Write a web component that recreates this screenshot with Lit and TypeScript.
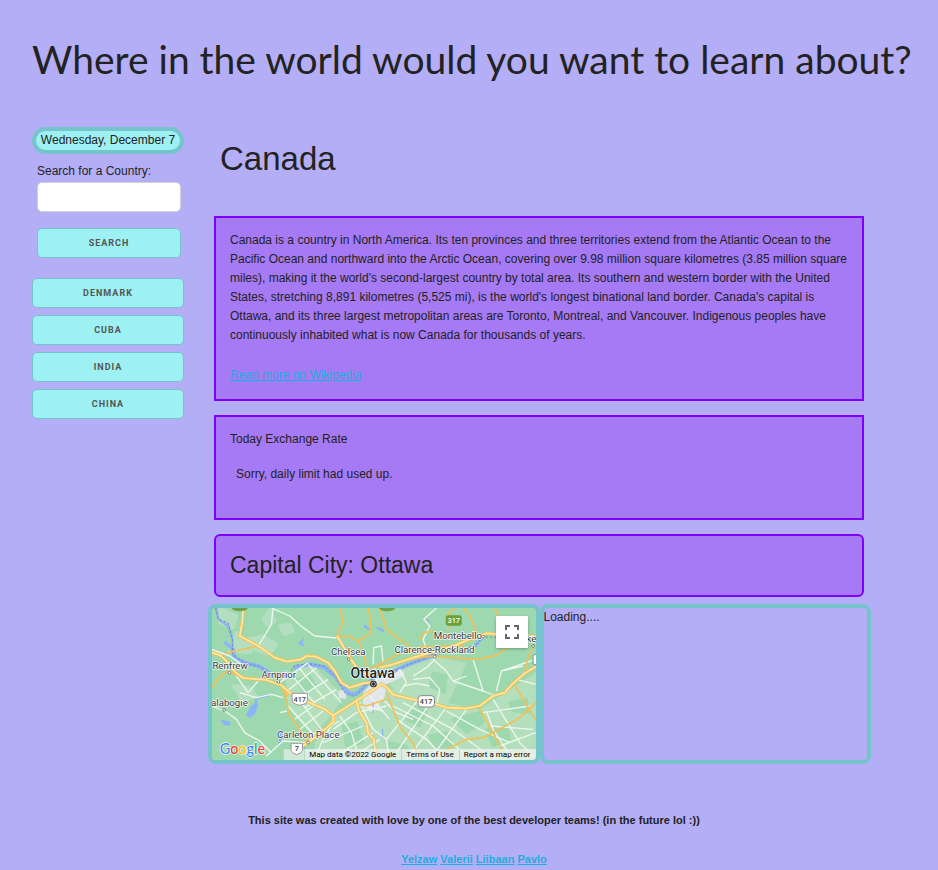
import { LitElement, html, css, svg } from "lit";
import { customElement, property } from "lit/decorators.js";

const COUNTRIES = ["Denmark", "Cuba", "India", "China"];
const AUTHORS = ["Yelzaw", "Valerii", "Liibaan", "Pavlo"];

// Town labels: name, x, y, font size
const TOWNS: [string, number, number, number][] = [
  ["Renfrew", 38, 219, 29],
  ["Arnprior", 185, 246, 29],
  ["alabogie", 34, 330, 29],
  ["Chelsea", 394, 178, 29],
  ["Carleton Place", 232, 427, 29],
  ["Montebello", 702, 130, 29],
  ["Clarence-Rockland", 584, 170, 29],
  ["ke", 980, 137, 29],
  ["Ottawa", 452, 246, 42],
];

const DOTS: [number, number][] = [
  [89, 230], [236, 258], [73, 342], [447, 189], [325, 440], [850, 122], [705, 182], [1000, 150],
];

// Motorways and trunk roads, drawn with a casing
const TRUNKS = [
  "M36 170 L62 178 L80 195 L108 230 L130 246 L200 252 L245 268 L270 290 L325 318 L372 338 L400 358 L430 340 L470 314 L520 282 L545 264 L562 275 L580 296 L640 310 L700 322 L740 334 L795 338 L840 330 L880 300 L915 290 L940 262 L975 232 L1008 212",
  "M400 358 L402 376 L370 405 L325 440 L308 450",
  "M470 314 L478 345 L500 380 L505 410 L522 430 L530 492",
  "M130 36 L128 75 L120 120 L176 150 L225 185 L262 197 L305 190 L320 180 L350 182 L385 200 L405 225 L425 260 L450 275 L490 262 L520 258",
  "M412 120 L430 150 L450 185 L475 220 L505 238",
  "M540 215 L580 205 L640 185 L700 168 L760 150 L810 130 L860 112 L1008 122",
];

const ROADS = [
  "M75 172 L120 162 L176 150 M36 275 L62 240 L85 225 L130 246",
  "M245 268 L262 315 L265 350 L325 440 M250 275 L262 300",
  "M412 120 L430 75 L420 36 M412 120 L450 122 L475 135 L490 165 L500 210 M475 135 L510 115 L513 75 L505 36",
  "M510 215 L560 208 L620 190 L700 180 L830 190 L890 178 L930 150 L1008 130",
  "M530 210 L600 172 L670 152 L790 150 M660 130 L672 110 L700 105 M750 100 L740 60 L765 36",
  "M790 36 L812 60 L830 110 M540 36 L560 100 L640 160 M885 36 L900 70",
  "M835 330 L860 375 L890 430 L925 492 M738 462 L800 430 L850 425 L900 400 L960 365 L1008 320",
  "M560 290 L580 340 L602 395 L640 440 L660 492 M940 262 L965 300 L1008 372 M1000 150 L985 185 L975 232",
  "M480 325 L500 330 L560 310",
];

const STREETS = [
  "M36 160 L90 180 L140 215 M220 36 L215 85 L176 150 M215 36 L270 60 L310 95 L345 120 L412 126",
  "M110 240 L145 290 L175 255 M120 290 L170 305 L215 295 L250 305 M36 330 L75 345 L110 370 L135 410 L180 435 L215 470",
  "M240 260 L325 200 M262 285 L350 215 M290 310 L385 250 M315 335 L410 280 M285 370 L340 330 M300 400 L370 345 M330 420 L420 375",
  "M275 235 L350 330 M300 218 L375 310 M325 205 L425 320 M290 300 L365 400 M265 330 L345 420",
  "M200 480 L250 435 L325 440 M240 350 L262 345 M345 492 L365 440 L402 376",
  "M420 360 L455 410 L480 492 M400 400 L470 350 L560 330 M370 440 L490 390 M410 480 L520 410 M445 492 L540 430",
  "M520 205 L522 155 L545 150 L550 200 M525 215 L530 265 M500 330 L550 345",
  "M590 240 L600 220 L620 260 L600 290 M680 160 L670 130 L690 90 L672 70 L710 36",
  "M700 190 L740 225 L760 255 L850 285 L890 300 M705 190 L680 215 L640 240 M760 255 L800 240 M820 190 L850 285",
  "M640 250 L690 245 L720 280 L712 322 M610 270 L650 262 L690 270 M890 285 L905 225 L1008 190 M905 225 L970 210",
  "M655 312 L560 430 M690 322 L590 470 M740 334 L620 492 M800 340 L690 492 M860 345 L880 400 L940 492",
  "M580 330 L700 390 L790 470 M610 320 L760 400 L870 480 M590 370 L680 430 L740 492 M740 345 L840 400 L930 440",
  "M880 310 L960 440 L1000 480 M850 350 L990 330 M870 390 L1000 400 M900 450 L1008 410 M950 250 L1008 265",
  "M480 320 L520 400 L560 430 L570 492 M540 300 L590 350 L640 370 M510 300 L570 370",
];

const WOODS = [
  "M60 36 L110 60 L100 95 L60 80Z", "M140 130 L190 120 L230 145 L210 175 L165 160Z",
  "M110 110 L90 165 L150 170 L160 150Z", "M240 90 L270 85 L280 105 L255 115Z",
  "M210 40 L225 75 L205 90 L190 70Z", "M100 270 L150 275 L170 300 L130 315Z",
];

const FARMS = [
  "M260 250 L330 195 L430 300 L400 350 L340 420 L260 330Z",
  "M400 360 L470 315 L540 270 L640 300 L840 340 L1008 230 L1008 492 L345 492 L345 440Z",
  "M540 225 L700 180 L800 200 L780 250 L740 330 L590 290Z",
];

const DARK_PATCHES = [
  "M640 330 L680 345 L660 390 L620 370Z", "M760 370 L840 350 L850 380 L800 410Z",
  "M860 400 L920 390 L930 430 L880 450Z", "M700 230 L740 240 L735 290 L690 270Z",
  "M570 440 L620 450 L640 492 L560 492Z", "M690 420 L740 410 L760 450 L710 460Z",
  "M430 390 L470 380 L490 440 L440 450Z", "M290 250 L330 240 L350 275 L310 290Z",
  "M930 320 L980 310 L990 350 L940 345Z",
];

@customElement("area-map")
export class AreaMap extends LitElement {
  static styles = css`
    :host { display: block; position: relative; overflow: hidden; background: #9ed8ae; }
    .canvas { display: block; width: 100%; height: 100%; }
    .label { font-family: Roboto, sans-serif; fill: #333; stroke: #fff; stroke-width: 4px; stroke-linejoin: round; paint-order: stroke; }
    .label.city { font-weight: 500; fill: #222; }
    .shield { font: 500 22px Roboto, sans-serif; fill: #444; text-anchor: middle; }
    .shield.light { fill: #fff; }
    .logo { font: 500 43px Lato, sans-serif; stroke: #fff; stroke-width: 4px; paint-order: stroke; }
    .blue { fill: #4285f4; }
    .red { fill: #e94235; }
    .yellow { fill: #fabb05; }
    .green { fill: #34a853; }
    .fullscreen {
      position: absolute; top: 8px; right: 8px; width: 32px; height: 32px;
      display: flex; align-items: center; justify-content: center;
      padding: 0; border: 0; border-radius: 1px; background: #fff;
      box-shadow: 0 1px 3px rgba(0, 0, 0, 0.3);
    }
    .credits {
      position: absolute; right: 0; bottom: 0; display: flex; height: 11px;
      font: 8px/11px Roboto, sans-serif; color: #000; white-space: nowrap;
    }
    .credits > * { padding: 0 5px 0 4px; color: inherit; text-decoration: none; background: rgba(245, 245, 245, 0.7); border-left: 1px solid #b9d8c2; }
  `;

  render() {
    return html`
      <svg class="canvas" viewBox="36 36 972 456" preserveAspectRatio="xMidYMid slice" role="img" aria-label="Map of Ottawa">
        <rect x="36" y="36" width="972" height="456" fill="#9ed8ae" />
        ${FARMS.map((d) => svg`<path d=${d} fill="#b3dfbd" />`)}
        ${WOODS.map((d) => svg`<path d=${d} fill="#b3dfc0" stroke="#b3dfc0" stroke-width="10" stroke-linejoin="round" />`)}
        ${DARK_PATCHES.map((d) => svg`<path d=${d} fill="#9ed8ae" stroke="#9ed8ae" stroke-width="8" stroke-linejoin="round" />`)}
        <path d="M490 290 L540 235 L610 225 L615 240 L560 265 L555 300 L520 350 L490 335Z M415 285 L435 280 L440 310 L418 305Z" fill="#e1e6ea" />
        <g fill="none" stroke="#8ab4f8" stroke-linecap="round" stroke-linejoin="round">
          <path stroke-width="12" d="M98 160 L105 185 L135 200 L180 212 L215 235 L262 242" />
          <path stroke-width="12" d="M285 215 L330 204 L375 215 L410 245 L435 280 L455 296 L475 290 L500 265 L530 240 L580 226 L625 206 L700 178" />
          <path stroke-width="7" d="M48 36 L56 70 L85 90 L98 130 L98 165" />
          <path stroke-width="10" d="M78 140 L100 160 M680 188 L697 174 M845 128 L826 150" />
          <path stroke-width="7" d="M170 310 L165 335 M178 305 L205 298 M240 440 L246 405 M495 90 L508 100 M535 96 L550 104" />
          <path stroke-width="4" d="M316 455 L316 492 M548 400 L550 425 M520 320 L520 350 M682 70 L690 78" />
        </g>
        <path d="M155 328 L176 322 L168 350 L152 366 L138 358Z M295 142 L313 125 L308 142 L314 150 L300 147Z M60 370 L94 378 L88 390 L72 386Z" fill="#8ab4f8" />
        <path d="M48 36 L56 70 L85 80 L98 130 L98 175 L135 200 L180 212 L215 235 L262 242 L285 208 L330 204 L375 210 L410 245 L435 290 L465 302 L500 265 L530 240 L580 226 L625 206 L700 178 L780 160 L826 150 L850 122 L900 125" fill="none" stroke="#7a86a8" stroke-width="3" stroke-dasharray="7 6" />
        ${STREETS.map((d) => svg`<path d=${d} fill="none" stroke="#eef7ef" stroke-width="4" stroke-linejoin="round" />`)}
        ${ROADS.map((d) => svg`<path d=${d} fill="none" stroke="#f1c057" stroke-width="5" stroke-linejoin="round" />`)}
        ${TRUNKS.map((d) => svg`<path d=${d} fill="none" stroke="#f4bd4c" stroke-width="10" stroke-linejoin="round" />`)}
        ${TRUNKS.map((d) => svg`<path d=${d} fill="none" stroke="#ffe9a8" stroke-width="5" stroke-linejoin="round" />`)}
        <ellipse cx="120" cy="36" rx="24" ry="10" fill="#6fa04c" />
        <ellipse cx="562" cy="36" rx="24" ry="10" fill="#6fa04c" />
        <rect x="738" y="58" width="48" height="31" rx="7" fill="#6b9f3b" />
        <text class="shield light" x="762" y="81">317</text>
        <path d="M277 292 h46 v20 q0 8 -10 12 l-13 4 l-13 -4 q-10 -4 -10 -12z" fill="#fff" stroke="#999" stroke-width="3" />
        <text class="shield" x="300" y="318">417</text>
        <rect x="655" y="299" width="49" height="34" rx="9" fill="#fff" stroke="#888" stroke-width="3" />
        <text class="shield" x="679" y="324">417</text>
        <path d="M252 460 h65 v32 h-65z" fill="#e6f2e8" opacity="0.7" />
        <path d="M274 442 h34 v22 q0 6 -17 12 q-17 -6 -17 -12z" fill="#fff" stroke="#999" stroke-width="3" />
        <text class="shield" x="291" y="466">7</text>
        <rect x="1000" y="176" width="20" height="30" rx="5" fill="#fff" stroke="#888" stroke-width="3" />
        ${DOTS.map(([x, y]) => svg`<circle cx=${x} cy=${y} r="4" fill="#fff" stroke="#555" stroke-width="2" />`)}
        <circle cx="521" cy="264" r="10" fill="#222" />
        <circle cx="521" cy="264" r="6" fill="none" stroke="#fff" stroke-width="2" />
        ${TOWNS.map(([name, x, y, size]) => svg`<text class=${size > 40 ? "label city" : "label"} x=${x} y=${y} font-size=${size}>${name}</text>`)}
        <text class="logo" x="60" y="473"><tspan class="blue">G</tspan><tspan class="red">o</tspan><tspan class="yellow">o</tspan><tspan class="blue">g</tspan><tspan class="green">l</tspan><tspan class="red">e</tspan></text>
      </svg>
      <button class="fullscreen" aria-label="Toggle fullscreen view">
        <svg width="16" height="16" viewBox="0 0 16 16" fill="none" stroke="#666" stroke-width="2">
          <path d="M2 6V2h4M10 2h4v4M14 10v4h-4M6 14H2v-4" />
        </svg>
      </button>
      <div class="credits">
        <span>Map data ©2022 Google</span>
        <a href="#terms">Terms of Use</a>
        <a href="#report">Report a map error</a>
      </div>
    `;
  }
}

@customElement("app-root")
export class AppRoot extends LitElement {
  @property() country = "Canada";

  static styles = css`
    :host {
      display: block; box-sizing: border-box; min-height: 100vh; padding: 0 22px 0 32px;
      background: #b4aef7; color: #222;
      font: 12px/19px "Liberation Sans", Arial, sans-serif;
    }
    * { box-sizing: border-box; }
    h1, h2, h3, p { margin: 0; font-weight: 400; }
    a { color: #1eaedb; }
    .title { padding: 34px 0 43px; font: 39px/50px "Trebuchet MS", Lato, sans-serif; }
    .layout { display: grid; grid-template-columns: 152px minmax(0, 1fr); column-gap: 24px; padding-right: 45px; }
    .sidebar { display: flex; flex-direction: column; }
    .date {
      border: 4px solid #76c4cb; border-radius: 14px; background: #9df1f3;
      text-align: center; white-space: nowrap;
    }
    .search { display: flex; flex-direction: column; padding: 8px 3px 20px 5px; }
    .field { height: 30px; margin: 1px 0 16px; padding: 6px 10px; border: 1px solid #d1d1d1; border-radius: 5px; background: #fff; font: inherit; }
    .button {
      height: 30px; padding: 0; border: 1px solid #76c4cb; border-radius: 5px; background: #9df1f3;
      color: #555; font: 700 9px/28px Roboto, "Liberation Sans", sans-serif;
      letter-spacing: 1px; text-transform: uppercase;
    }
    .countries { display: flex; flex-direction: column; gap: 7px; }
    .name { padding: 12px 12px 37px; font-size: 33px; line-height: 40px; }
    .cards { display: flex; flex-direction: column; gap: 14px; padding: 0 7px 7px 6px; }
    .card { padding: 13px 14px 14px; border: 2px solid #8000ff; background: #a67af5; }
    .more { margin-top: 21px; }
    .rate { min-height: 105px; }
    .note { padding: 16px 6px 0; }
    .capital { border-radius: 6px; font-size: 23px; line-height: 32px; }
    .panels { display: grid; grid-template-columns: 1fr 1fr; }
    .panel { height: 160px; border: 4px solid #76c4cb; border-radius: 8px; overflow: hidden; }
    .map { height: 100%; }
    .footer { padding: 46px 0 0; text-align: center; font: 11px/20px "Trebuchet MS", "Liberation Sans", sans-serif; }
    .footer p { font-weight: 700; }
    .authors { padding-top: 19px; }
  `;

  render() {
    return html`
      <h1 class="title">Where in the world would you want to learn about?</h1>
      <div class="layout">
        <aside class="sidebar">
          <div class="date">Wednesday, December 7</div>
          <form class="search" @submit=${(e: Event) => e.preventDefault()}>
            <label for="country">Search for a Country:</label>
            <input class="field" id="country" type="text" />
            <button class="button" type="submit">Search</button>
          </form>
          <div class="countries">
            ${COUNTRIES.map((c) => html`<button class="button" @click=${() => (this.country = c)}>${c}</button>`)}
          </div>
        </aside>
        <main>
          <h2 class="name">${this.country}</h2>
          <div class="cards">
            <section class="card">
              <p>Canada is a country in North America. Its ten provinces and three territories extend from the Atlantic Ocean to the Pacific Ocean and northward into the Arctic Ocean, covering over 9.98 million square kilometres (3.85 million square miles), making it the world's second-largest country by total area. Its southern and western border with the United States, stretching 8,891 kilometres (5,525 mi), is the world's longest binational land border. Canada's capital is Ottawa, and its three largest metropolitan areas are Toronto, Montreal, and Vancouver. Indigenous peoples have continuously inhabited what is now Canada for thousands of years.</p>
              <p class="more"><a href="https://en.wikipedia.org/wiki/Canada">Read more on Wikipedia</a></p>
            </section>
            <section class="card rate">
              <p>Today Exchange Rate</p>
              <p class="note">Sorry, daily limit had used up.</p>
            </section>
            <h3 class="card capital">Capital City: Ottawa</h3>
          </div>
          <div class="panels">
            <div class="panel"><area-map class="map"></area-map></div>
            <div class="panel">Loading....</div>
          </div>
        </main>
      </div>
      <footer class="footer">
        <p>This site was created with love by one of the best developer teams! (in the future lol :))</p>
        <p class="authors">${AUTHORS.map((a) => html`<a href="#${a}">${a}</a> `)}</p>
      </footer>
    `;
  }
}
